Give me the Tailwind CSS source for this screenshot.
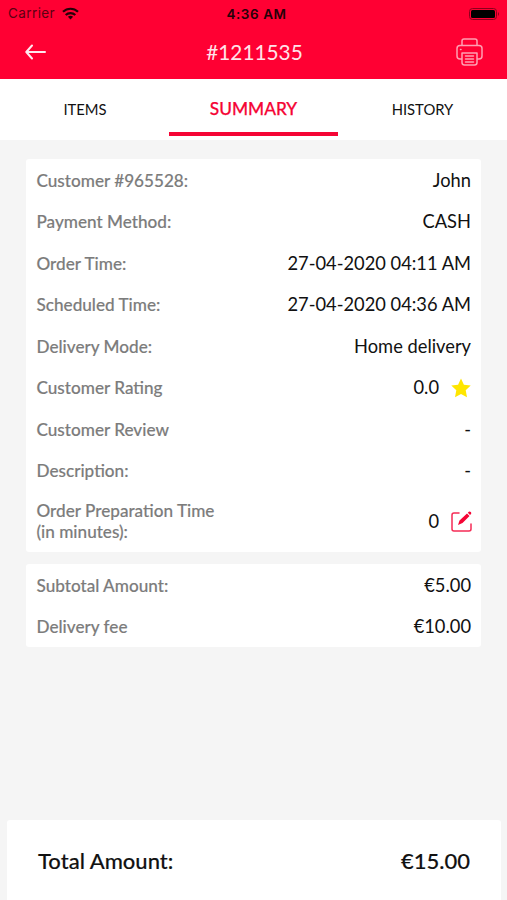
<!DOCTYPE html>
<html lang="en"><head><meta charset="utf-8"><title>Order summary</title>
<script src="https://cdn.jsdelivr.net/npm/@tailwindcss/browser@4"></script></head>
<body class="w-[507px] h-[900px] overflow-hidden bg-[#f5f5f5] font-['Lato',sans-serif] text-[#111] flex flex-col">
<header class="h-[79px] shrink-0 bg-[#ff0033]">
<div class="h-[27px] grid grid-cols-3 items-center pl-2 pr-[7px] font-['Inter',sans-serif] text-[13.5px]">
<div class="flex items-center gap-[7px]"><span class="text-[#5c0012] tracking-[0.4px]">Carrier</span>
<svg class="w-[17px] h-[13px]" viewBox="0 0 17 13" fill="none" stroke="#250008" stroke-width="2.2"><path d="M1 4.8C5.2.7 11.8.7 16 4.8M3.7 8C6.3 5.5 10.7 5.5 13.3 8"/><path d="M8.5 12.5 5.9 9.8Q8.5 7.9 11.1 9.8Z" fill="#250008" stroke="none"/></svg></div>
<span class="text-center font-semibold text-[#250008] pl-[5px] pt-px tracking-[0.55px] whitespace-nowrap">4:36 AM</span>
<svg class="justify-self-end w-[31px] h-[12px]" viewBox="0 0 31 12"><rect x=".5" y=".5" width="27" height="11" rx="3" fill="none" stroke="#8a001c"/><rect x="2" y="2" width="24" height="8" rx="1.5"/><path d="M29 4q2 2 0 4z" fill="#8a001c"/></svg>
</div>
<div class="h-[50px] flex items-center justify-between pl-[25px] pr-6">
<svg class="w-[28px] h-[16px]" viewBox="0 0 28 16" fill="none" stroke="#ffe8ee" stroke-width="2" stroke-linecap="round" stroke-linejoin="round"><path d="M20 8H1.5M7 1.5 1.3 8 7 14.5"/></svg>
<h1 class="text-[20.8px] text-[#ffe3e9]">#1211535</h1>
<svg class="w-[27px] h-[28px]" viewBox="0 0 27 28" fill="none" stroke="#ff9fb2" stroke-width="1.5" stroke-linecap="round" stroke-linejoin="round"><path d="M6 7.5V3Q6 1 8 1h11q2 0 2 2v4.500M6 21H4q-3 0-3-3v-7.500q0-3 3-3h19q3 0 3 3V18q0 3-3 3h-2M6 15h15v9.500q0 2.500-2.500 2.500h-10Q6 27 6 24.500zM9.500 18h8M9.500 21h8M9.500 24h8M4.500 11.500h.5"/></svg>
</div></header>
<nav class="h-[61px] shrink-0 bg-white grid grid-cols-3 text-center text-[14.8px] font-normal">
<span class="leading-[60px] pl-px">ITEMS</span><span class="h-[57px] leading-[60px] border-b-4 border-[#f50535] text-[#f50535] text-[17.3px] font-medium [-webkit-text-stroke:0.25px_currentColor]">SUMMARY</span><span class="leading-[60px]">HISTORY</span></nav>
<main class="px-[26px] pt-[19px] flex-1 flex flex-col gap-3">
<dl class="bg-white rounded-[3px] h-[393px] pt-[0.7px] pl-[10.500px] pr-[10px] text-[18.3px] [&_dt]:text-[17.15px] [&_dt]:font-medium [&_dt]:text-[#7c7c7c] [&_dt]:[-webkit-text-stroke:0.15px_currentColor] [&>div]:h-[41.500px] [&>div]:flex [&>div]:items-center [&>div]:justify-between">
<div><dt>Customer #965528:</dt><dd>John</dd></div>
<div><dt>Payment Method:</dt><dd>CASH</dd></div>
<div><dt>Order Time:</dt><dd>27-04-2020 04:11 AM</dd></div>
<div><dt>Scheduled Time:</dt><dd>27-04-2020 04:36 AM</dd></div>
<div><dt>Delivery Mode:</dt><dd>Home delivery</dd></div>
<div><dt>Customer Rating</dt><dd class="flex items-center gap-3">0.0<svg class="w-5 h-5" viewBox="0 0 20 20" fill="#ffe600"><path d="m10 .5 2.900 6.300 6.800.800-5 4.700 1.300 6.900L10 15.900l-6 3.300 1.300-6.900-5-4.700 6.800-.8z"/></svg></dd></div>
<div><dt>Customer Review</dt><dd>-</dd></div>
<div><dt>Description:</dt><dd>-</dd></div>
<div class="pt-[9px] box-content"><dt class="leading-[21px]">Order Preparation Time<br>(in minutes):</dt><dd class="flex items-center gap-3 -mr-px">0<svg class="w-[21px] h-[21px]" viewBox="0 0 21 21"><path d="M8 2H3Q1 2 1 4v14q0 2 2 2h15q2 0 2-2v-5" fill="none" stroke="#f52b55" stroke-width="1.500" stroke-linecap="round"/><path d="m7 14 1.500-4.500 7.500-7 2.500 2.500-7 7zM16.800 1.800l1-1q1-.8 2 .2t.2 2L19 4z" fill="#f50535"/></svg></dd></div>
</dl>
<dl class="bg-white rounded-[3px] h-[83px] pt-[0.7px] pl-[10.500px] pr-[10px] text-[18.3px] [&_dt]:text-[17.15px] [&_dt]:font-medium [&_dt]:text-[#7c7c7c] [&_dt]:[-webkit-text-stroke:0.15px_currentColor] [&>div]:h-[41.500px] [&>div]:flex [&>div]:items-center [&>div]:justify-between">
<div><dt>Subtotal Amount:</dt><dd>€5.00</dd></div>
<div><dt>Delivery fee</dt><dd>€10.00</dd></div>
</dl></main>
<footer class="ml-[7px] mr-[6px] h-[80px] shrink-0 bg-white rounded-t-[3px] pl-[31px] pr-[31px] flex items-center justify-between text-[22px] font-medium [-webkit-text-stroke:0.15px_currentColor]"><span>Total Amount:</span><span>€15.00</span></footer>
</body></html>
